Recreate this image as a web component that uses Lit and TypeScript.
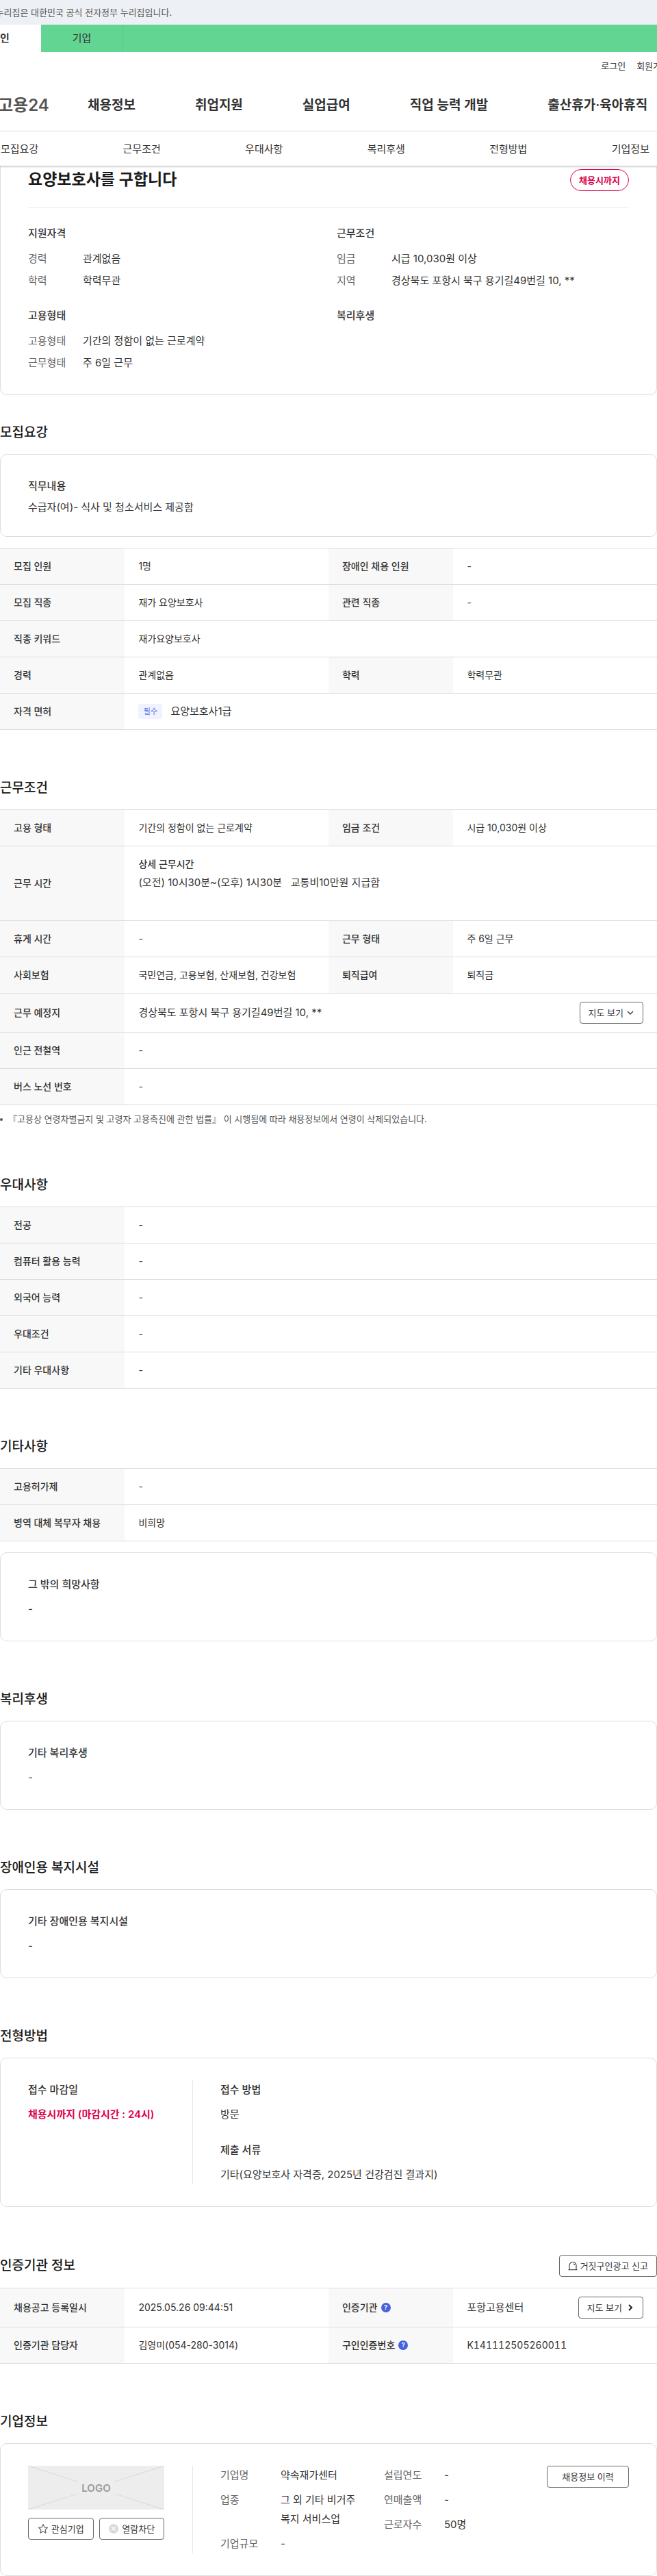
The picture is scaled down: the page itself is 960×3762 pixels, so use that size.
import { LitElement, html, css, svg, nothing } from "lit";
import { customElement } from "lit/decorators.js";

type Cell = { label: unknown; value: unknown };
type Row = Cell[];

const chevronDown = svg`<svg viewBox="0 0 12 12" width="12" height="12" aria-hidden="true"><path d="M2 4l4 4 4-4" fill="none" stroke="#333" stroke-width="1.3"/></svg>`;
const chevronRight = svg`<svg viewBox="0 0 12 12" width="12" height="12" aria-hidden="true"><path d="M4 2l4 4-4 4" fill="none" stroke="#222" stroke-width="2"/></svg>`;
const siren = svg`<svg viewBox="0 0 14 14" width="14" height="14" aria-hidden="true"><path d="M.5 12.800h13M2 12.800V6.500a5 5 0 0 1 10 0v6.300M7.800 4a2.300 2.300 0 0 1 1.900 2" fill="none" stroke="#333" stroke-width="1.1"/></svg>`;
const star = svg`<svg viewBox="0 0 16 16" width="16" height="16" aria-hidden="true"><path d="M8 1.500l1.900 4.300 4.600.5-3.400 3.200.9 4.700L8 11.800l-4 2.400.9-4.700L1.500 6.300l4.600-.5z" fill="none" stroke="#666" stroke-width="1.2" stroke-linejoin="round"/></svg>`;
const block = svg`<svg viewBox="0 0 16 16" width="16" height="16" aria-hidden="true"><circle cx="8" cy="8" r="7" fill="#d9d9d9"/><path d="M5.200 5.200l5.600 5.600M10.800 5.200l-5.600 5.600" stroke="#fff" stroke-width="1.3"/></svg>`;

@customElement("app-root")
export class AppRoot extends LitElement {
  static styles = css`
    :host {
      display: block;
      overflow: hidden;
      background: #fff;
      color: #333;
      font: 400 15px/24px Inter, "Noto Sans CJK KR", sans-serif;
      word-break: keep-all;
    }
    * { box-sizing: border-box; }
    h1, h2, h3, p, dl, dd, dt, ul { margin: 0; padding: 0; }
    ul { list-style: none; }
    a { color: inherit; text-decoration: none; white-space: nowrap; }
    svg { display: block; flex: none; }
    .notice { background: #edf1f5; color: #555; font-size: 13px; line-height: 36px; white-space: nowrap; }
    .notice p { margin-left: -22px; }
    .member { display: flex; height: 40px; background: #62d593; }
    .member a { width: 120px; line-height: 40px; text-align: center; font-size: 15px; border-right: 1px solid #55c888; }
    .member a.on { margin-left: -60px; background: #fff; border: 0; font-weight: 600; }
    .util { display: flex; justify-content: flex-end; gap: 16px; height: 40px; line-height: 40px; font-size: 13px; margin-right: -18px; }
    .gnb { display: flex; align-items: center; height: 76px; font-size: 19px; font-weight: 600; }
    .gnb .logo { margin-left: -3px; width: 131px; font-size: 24px; font-weight: 600; color: #555; }
    .gnb ul { display: flex; gap: 87px; }
    .anchors { display: flex; justify-content: space-between; height: 50px; padding: 0 11px 0 1px; line-height: 49px; border-top: 1px solid #eee; box-shadow: 0 1px 3px rgba(0, 0, 0, 0.3); position: relative; background: #fff; }
    .card { border: 1px solid #ddd; border-radius: 10px; padding: 32px 40px; }
    .summary { border-top: 0; border-radius: 0 0 10px 10px; padding: 5px 40px 34px; }
    .title { display: flex; justify-content: space-between; align-items: flex-start; height: 57px; border-bottom: 1px solid #e8e8e8; }
    .title h1 { font-size: 23px; line-height: 30px; font-weight: 600; color: #1a1a1a; }
    .due { width: 86px; height: 32px; line-height: 30px; border: 1px solid #d9004c; border-radius: 16px; color: #d9004c; font-size: 13px; font-weight: 600; text-align: center; }
    .facts { display: grid; grid-template-columns: 1fr 1fr; column-gap: 24px; row-gap: 27px; padding-top: 25px; }
    .facts dl { display: grid; grid-template-columns: 80px 1fr; row-gap: 8px; margin-top: 13px; }
    dt { color: #666; }
    h3 { font-size: 15px; line-height: 28px; font-weight: 500; }
    .facts h3 { line-height: 24px; }
    .head { display: flex; justify-content: space-between; align-items: center; min-height: 30px; margin: 70px 0 16px; }
    .head.first { margin-top: 40px; }
    h2 { font-size: 19px; line-height: 30px; font-weight: 500; color: #1a1a1a; }
    .card p { line-height: 28px; margin-top: 8px; }
    .card.compact { padding-bottom: 30px; margin-bottom: 16px; }
    .card.compact p { line-height: 24px; margin-top: 5px; }
    .after { margin-top: 16px; }
    table { width: 100%; border-collapse: separate; border-spacing: 0; table-layout: fixed; border-top: 1px solid #ddd; }
    col.label { width: 19%; }
    col.value { width: 31%; }
    th, td { height: 53px; padding: 0 20px; border-bottom: 1px solid #ddd; text-align: left; font-size: 14px; font-weight: 400; }
    th { background: #f8f8f8; font-weight: 500; }
    tr.tall td { height: 109px; padding-top: 14px; vertical-align: top; }
    tr.tall strong { display: block; font-weight: 500; margin-bottom: 3px; }
    tr.roomy > * { height: 57px; }
    .large { font-size: 15px; }
    .code { font-variant-numeric: tabular-nums; }
    .split { display: flex; justify-content: space-between; align-items: center; font-size: 15px; }
    .license { display: flex; align-items: center; gap: 12px; font-size: 15px; }
    .need { width: 35px; line-height: 22px; border-radius: 4px; background: #f0f2ff; color: #5b74e6; font-size: 11px; text-align: center; }
    button { display: inline-flex; align-items: center; justify-content: center; gap: 4px; height: 32px; padding: 0 12px; border: 1px solid #666; border-radius: 4px; background: #fff; color: #333; font: 400 13px/20px Inter, "Noto Sans CJK KR", sans-serif; white-space: nowrap; }
    button.arrow { gap: 6px; }
    .tip { display: inline-flex; align-items: center; gap: 5px; }
    button.help { width: 14px; height: 14px; padding: 0; border: 0; border-radius: 7px; background: #4461e0; color: #fff; font-size: 9px; line-height: 14px; font-weight: 700; }
    .note { display: flex; gap: 8px; padding: 10px 0 2px; font-size: 13px; line-height: 20px; color: #555; }
    .note::before { content: ""; width: 4px; height: 4px; margin-top: 9px; border-radius: 2px; background: #555; }
    .method { display: grid; grid-template-columns: 240px 1fr; }
    .method .right { border-left: 1px solid #e8e8e8; padding-left: 40px; }
    .method .right p + h3 { margin-top: 24px; }
    .method .deadline { color: #e0004f; font-weight: 600; }
    .company { display: grid; grid-template-columns: 240px 1fr auto; }
    .brand { padding-right: 41px; }
    .picture { display: block; width: 100%; height: 64px; background: #ededed; }
    .picture text { font: 600 15px Inter, sans-serif; fill: #999; }
    .actions { display: grid; grid-template-columns: 1fr 1fr; gap: 8px; margin-top: 12px; }
    .actions button { padding: 0; }
    .info { display: grid; grid-template-columns: 199px 1fr; gap: 40px; padding-left: 40px; border-left: 1px solid #e8e8e8; line-height: 28px; }
    .info dl { display: grid; grid-template-columns: 88px 1fr; align-content: start; row-gap: 8px; }
    .history { width: 120px; }
  `;

  private facts(title: string, items: [string, string][]) {
    return html`<section>
      <h3>${title}</h3>
      ${items.length ? html`<dl>${items.map(([k, v]) => html`<dt>${k}</dt><dd>${v}</dd>`)}</dl>` : nothing}
    </section>`;
  }

  private row(cells: Row, kind = "") {
    return html`<tr class=${kind}>
      ${cells.map((c) => html`<th scope="row">${c.label}</th><td colspan=${cells.length === 1 ? 3 : 1}>${c.value}</td>`)}
    </tr>`;
  }

  private table(rows: unknown) {
    return html`<table>
      <colgroup><col class="label" /><col class="value" /><col class="label" /><col class="value" /></colgroup>
      <tbody>${rows}</tbody>
    </table>`;
  }

  private head(title: string, extra: unknown = nothing, kind = "") {
    return html`<div class="head ${kind}"><h2>${title}</h2>${extra}</div>`;
  }

  private card(title: string, text: string, kind = "") {
    return html`<div class="card ${kind}"><h3>${title}</h3><p>${text}</p></div>`;
  }

  private help(label: string) {
    return html`<span class="tip">${label}<button class="help" aria-label="${label} 도움말">?</button></span>`;
  }

  render() {
    const c = (label: unknown, value: unknown = "-"): Cell => ({ label, value });
    return html`
      <div class="notice"><p>이 누리집은 대한민국 공식 전자정부 누리집입니다.</p></div>
      <header>
        <nav class="member"><a class="on" href="#">개인</a><a href="#">기업</a></nav>
        <div class="util"><a href="#">로그인</a><a href="#">회원가입</a></div>
        <nav class="gnb">
          <a class="logo" href="#">고용24</a>
          <ul>
            ${["채용정보", "취업지원", "실업급여", "직업 능력 개발", "출산휴가·육아휴직"].map((t) => html`<li><a href="#">${t}</a></li>`)}
          </ul>
        </nav>
        <nav class="anchors">
          ${["모집요강", "근무조건", "우대사항", "복리후생", "전형방법", "기업정보"].map((t) => html`<a href="#">${t}</a>`)}
        </nav>
      </header>
      <main>
        <div class="card summary">
          <div class="title"><h1>요양보호사를 구합니다</h1><span class="due">채용시까지</span></div>
          <div class="facts">
            ${this.facts("지원자격", [["경력", "관계없음"], ["학력", "학력무관"]])}
            ${this.facts("근무조건", [["임금", "시급 10,030원 이상"], ["지역", "경상북도 포항시 북구 용기길49번길 10, **"]])}
            ${this.facts("고용형태", [["고용형태", "기간의 정함이 없는 근로계약"], ["근무형태", "주 6일 근무"]])}
            ${this.facts("복리후생", [])}
          </div>
        </div>

        ${this.head("모집요강", nothing, "first")}
        ${this.card("직무내용", "수급자(여)- 식사 및 청소서비스 제공함", "compact")}
        ${this.table([
          this.row([c("모집 인원", "1명"), c("장애인 채용 인원")]),
          this.row([c("모집 직종", "재가 요양보호사"), c("관련 직종")]),
          this.row([c("직종 키워드", "재가요양보호사")]),
          this.row([c("경력", "관계없음"), c("학력", "학력무관")]),
          this.row([c("자격 면허", html`<div class="license"><span class="need">필수</span>요양보호사1급</div>`)]),
        ])}

        ${this.head("근무조건")}
        ${this.table([
          this.row([c("고용 형태", "기간의 정함이 없는 근로계약"), c("임금 조건", "시급 10,030원 이상")]),
          this.row([c("근무 시간", html`<strong>상세 근무시간</strong><span class="large">(오전) 10시30분~(오후) 1시30분&nbsp;&nbsp; 교통비10만원 지급함</span>`)], "tall"),
          this.row([c("휴게 시간"), c("근무 형태", "주 6일 근무")]),
          this.row([c("사회보험", "국민연금, 고용보험, 산재보험, 건강보험"), c("퇴직급여", "퇴직금")]),
          this.row([c("근무 예정지", html`<div class="split">경상북도 포항시 북구 용기길49번길 10, **<button>지도 보기${chevronDown}</button></div>`)], "roomy"),
          this.row([c("인근 전철역")]),
          this.row([c("버스 노선 번호")]),
        ])}
        <p class="note">『고용상 연령차별금지 및 고령자 고용촉진에 관한 법률』 이 시행됨에 따라 채용정보에서 연령이 삭제되었습니다.</p>

        ${this.head("우대사항")}
        ${this.table(["전공", "컴퓨터 활용 능력", "외국어 능력", "우대조건", "기타 우대사항"].map((t) => this.row([c(t)])))}

        ${this.head("기타사항")}
        ${this.table([this.row([c("고용허가제")]), this.row([c("병역 대체 복무자 채용", "비희망")])])}
        ${this.card("그 밖의 희망사항", "-", "after")}

        ${this.head("복리후생")}
        ${this.card("기타 복리후생", "-")}

        ${this.head("장애인용 복지시설")}
        ${this.card("기타 장애인용 복지시설", "-")}

        ${this.head("전형방법")}
        <div class="card method">
          <div><h3>접수 마감일</h3><p class="deadline">채용시까지 (마감시간 : 24시)</p></div>
          <div class="right">
            <h3>접수 방법</h3><p>방문</p>
            <h3>제출 서류</h3><p>기타(요양보호사 자격증, 2025년 건강검진 결과지)</p>
          </div>
        </div>

        ${this.head("인증기관 정보", html`<button>${siren}거짓구인광고 신고</button>`)}
        ${this.table([
          this.row([
            c("채용공고 등록일시", "2025.05.26 09:44:51"),
            c(this.help("인증기관"), html`<div class="split">포항고용센터<button class="arrow">지도 보기${chevronRight}</button></div>`),
          ], "roomy"),
          this.row([c("인증기관 담당자", "김영미(054-280-3014)"), c(this.help("구인인증번호"), html`<span class="code">K141112505260011</span>`)]),
        ])}

        ${this.head("기업정보")}
        <div class="card company">
          <div class="brand">
            <svg class="picture" viewBox="0 0 199 64" preserveAspectRatio="none" role="img" aria-label="LOGO">
              <path d="M0 0l72 23M199 0l-72 23M0 64l72-23M199 64l-72-23" stroke="#dcdcdc" stroke-width="1.200" />
              <text x="99.500" y="38" text-anchor="middle">LOGO</text>
            </svg>
            <div class="actions"><button>${star}관심기업</button><button>${block}열람차단</button></div>
          </div>
          <div class="info">
            <dl><dt>기업명</dt><dd>약속재가센터</dd><dt>업종</dt><dd>그 외 기타 비거주 복지 서비스업</dd><dt>기업규모</dt><dd>-</dd></dl>
            <dl><dt>설립연도</dt><dd>-</dd><dt>연매출액</dt><dd>-</dd><dt>근로자수</dt><dd>50명</dd></dl>
          </div>
          <button class="history">채용정보 이력</button>
        </div>
      </main>
    `;
  }
}
